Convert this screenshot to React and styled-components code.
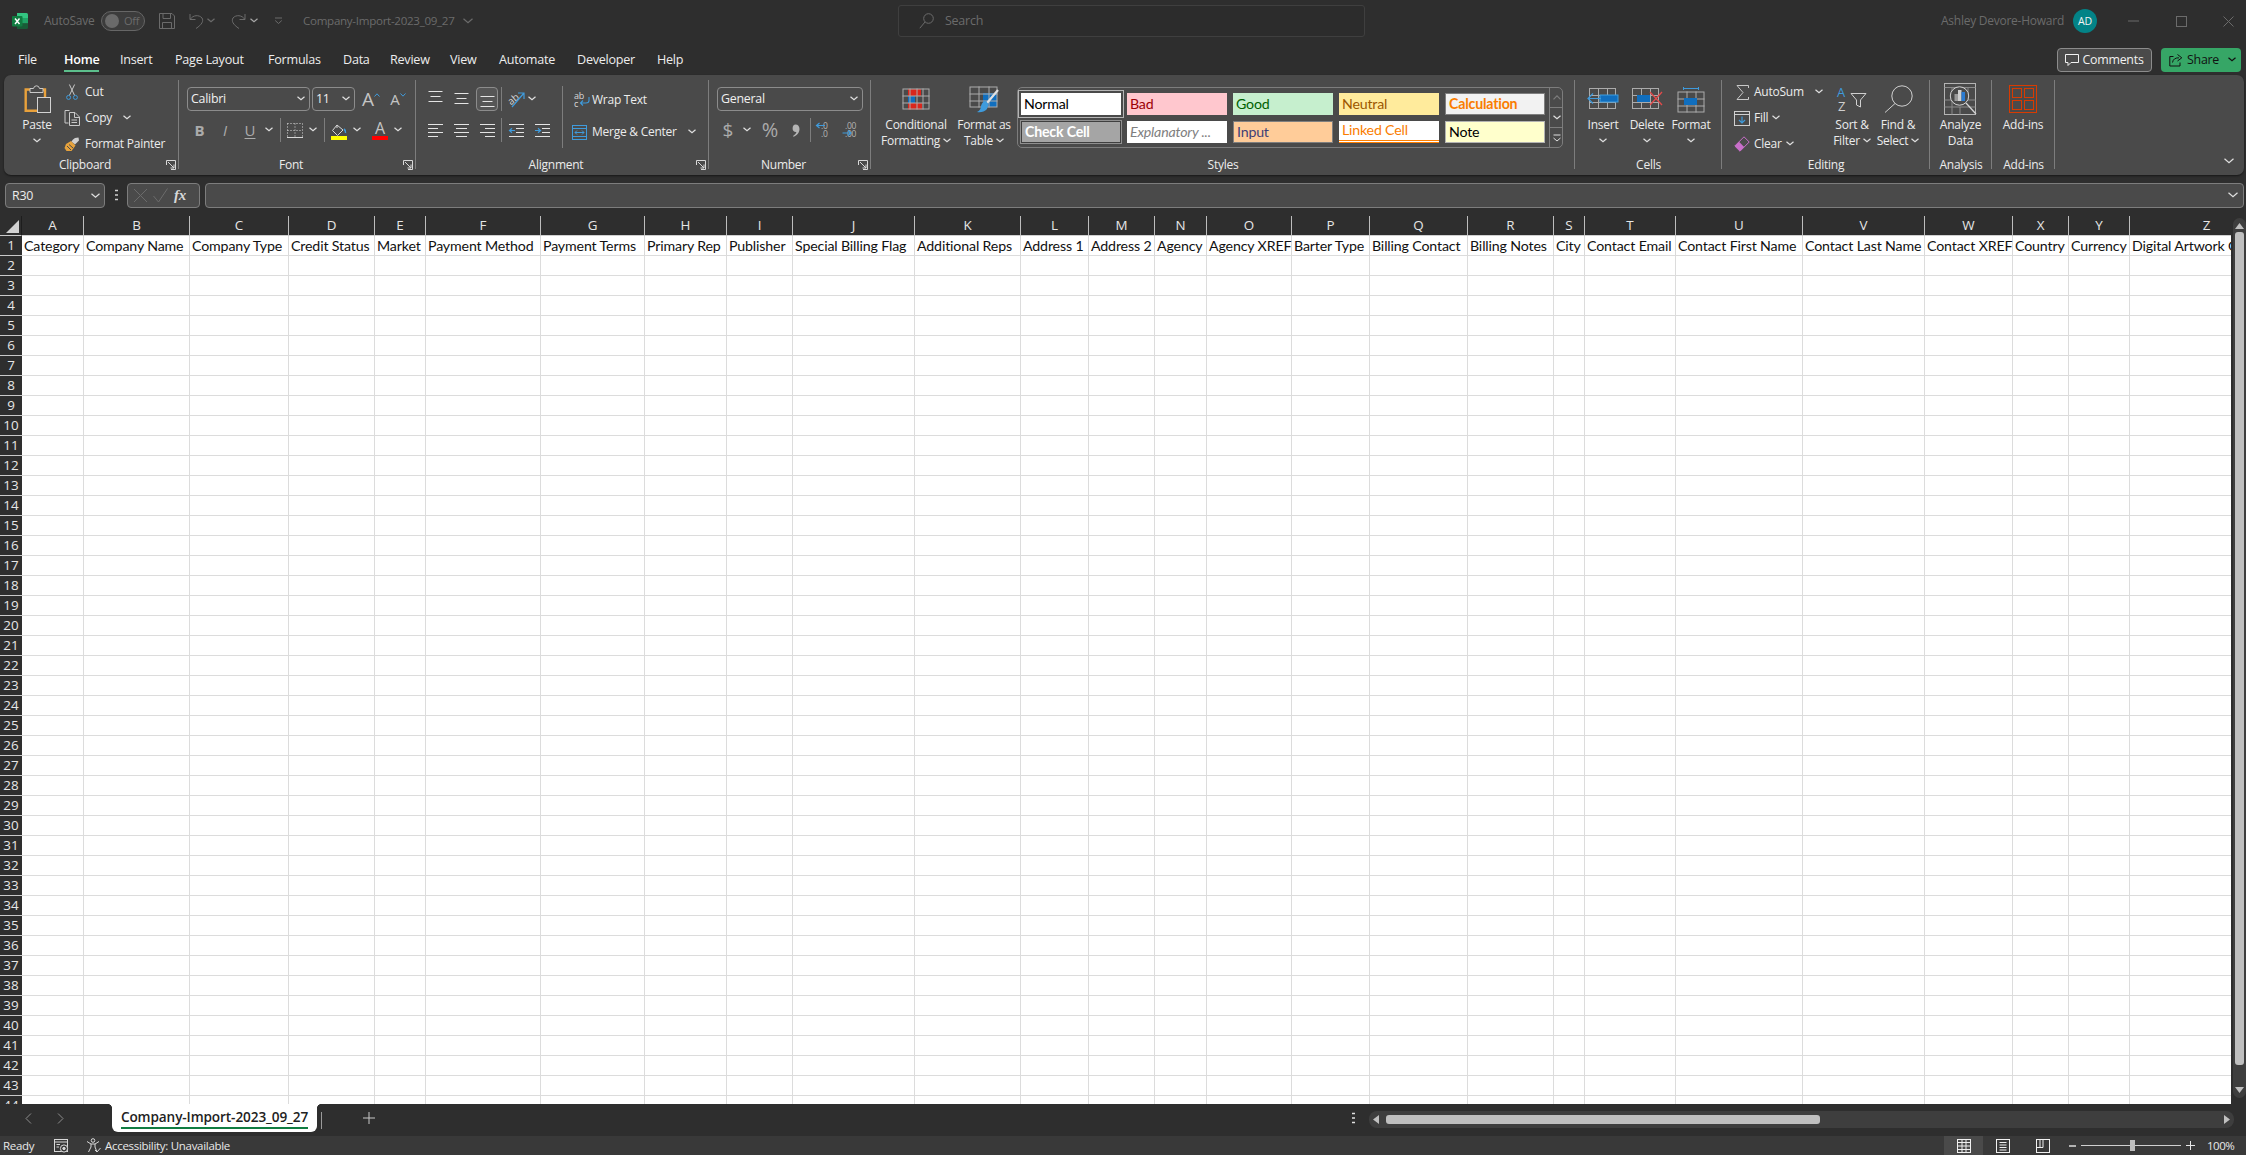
import React from 'react';
import styled, { createGlobalStyle, css } from 'styled-components';

const UI = '"Open Sans", "Noto Sans", sans-serif';
const SHEET = 'Lato, "Open Sans", sans-serif';
const BLUE = '#3f9bdc';
const LINE = '#c9c9c9';
const DIM = '#6b6b6b';

const Global = createGlobalStyle`
  html, body { margin: 0; padding: 0; background: #2e2e2e; }
  * { box-sizing: border-box; }
  svg { display: block; flex: none; overflow: visible; }
`;

const App_ = styled.div`
  width: 2246px; height: 1155px; overflow: hidden;
  display: flex; flex-direction: column;
  background: #2e2e2e; color: #ececec;
  font: 12px/16px ${UI}; letter-spacing: -0.25px;
`;

/* ---------- title bar ---------- */
const TitleBar = styled.header`
  height: 42px; flex: none; display: flex; align-items: center; color: ${DIM};
`;
const TitleLeft = styled.div`width: 898px; flex: none; display: flex; align-items: center; padding-left: 12px;`;
const Tool = styled.span`
  display: inline-flex; align-items: center; justify-content: center; flex: none; position: relative;
  width: ${p => p.$w || 24}px; height: ${p => p.$h || 24}px;
  margin-left: ${p => p.$ml || 0}px;
  color: ${p => p.$c || 'inherit'};
  font-size: ${p => p.$fs || 12}px;
`;
const AutoSave = styled.span`width: 50px; margin-left: 15px; flex: none; font-size: 12px; white-space: nowrap;`;
const Toggle = styled.span`
  width: 44px; height: 20px; margin-left: 7px; flex: none; display: flex; align-items: center; gap: 5px;
  border: 1px solid #666; border-radius: 10px; background: #3c3c3c; padding-left: 3px; font-size: 11px;
`;
const Knob = styled.span`width: 14px; height: 14px; border-radius: 50%; background: #6a6a6a; flex: none;`;
const DocTitle = styled.span`width: 156px; margin-left: 19px; flex: none; font-size: 11.6px; letter-spacing: -0.3px; white-space: nowrap;`;
const SearchBox = styled.div`
  width: 467px; height: 32px; flex: none; display: flex; align-items: center; gap: 11px; padding-left: 20px;
  border: 1px solid #3f3f3f; border-radius: 3px; background: #2c2c2c; font-size: 12.5px;
`;
const TitleRight = styled.div`flex: 1; display: flex; align-items: center; justify-content: flex-end;`;
const UserName = styled.span`font-size: 12px; white-space: nowrap;`;
const Avatar = styled.span`
  width: 24px; height: 24px; margin-left: 9px; border-radius: 50%; background: #038387; color: #f4f4f4;
  display: flex; align-items: center; justify-content: center; font-size: 10.5px; flex: none;
`;

/* ---------- tabs ---------- */
const TabsRow = styled.nav`height: 33px; flex: none; display: flex; align-items: center; padding: 3px 5px 0 18px;`;
const TabSlot = styled.span`width: ${p => p.$w}px; flex: none; display: flex;`;
const TabText = styled.span`
  position: relative; font-size: 12.6px; white-space: nowrap; color: #ededed;
  ${p => p.$on && css`
    font-weight: 600; color: #fff;
    &::after { content: ''; position: absolute; left: 0; right: 0; bottom: -4px; height: 2px; background: #5cbf8c; }
  `}
`;
const Spring = styled.span`flex: 1;`;
const CommentsBtn = styled.button`
  width: 95px; height: 24px; display: flex; align-items: center; justify-content: center; gap: 3px;
  background: #4a4a4a; border: 1px solid #8c8c8c; border-radius: 4px; color: #f0f0f0; font: inherit; font-size: 12.4px; padding: 0; letter-spacing: -0.25px;
`;
const ShareBtn = styled.button`
  width: 80px; height: 24px; margin-left: 9px; display: flex; align-items: center; gap: 4px; padding: 0 5px 0 8px;
  background: #36a666; border: 0; border-radius: 4px; color: #111; font: inherit; font-size: 12.4px; letter-spacing: -0.25px;
`;
const ShareChev = styled.span`margin-left: auto; display: flex;`;

/* ---------- ribbon ---------- */
const Ribbon = styled.section`
  height: 100px; flex: none; margin: 0 2px 0 4px; padding-top: 4px; display: flex;
  background: #4a4a4a; border-radius: 7px; box-shadow: 0 1px 2px rgba(0,0,0,.5);
`;
const Group = styled.div`
  width: ${p => p.$w}px; height: 96px; flex: none; display: flex; flex-direction: column; position: relative;
  &::after { content: ''; position: absolute; right: 0; top: 1px; bottom: 6px; width: 1px; background: #7d7d7d; }
`;
const Body = styled.div`height: 78px; flex: none; display: flex; padding-left: ${p => p.$pl || 0}px;`;
const GroupFoot = styled.div`height: 16px; flex: none; display: flex; align-items: center; padding-right: ${p => p.$launch ? 3 : 0}px;`;
const GroupName = styled.span`flex: 1; text-align: center; color: #ececec;`;
const Rest = styled.div`flex: 1; display: flex; align-items: flex-end; justify-content: flex-end; padding: 0 10px 11px 0;`;

const SmallCol = styled.div`width: ${p => p.$w}px; flex: none; display: flex; flex-direction: column;`;
const SmallRow = styled.div`height: 26px; flex: none; display: flex; align-items: center; white-space: nowrap; gap: ${p => p.$gap ?? 5}px;`;
const IconSlot = styled.span`width: 16px; flex: none; display: flex; justify-content: center;`;
const Large = styled.div`
  width: ${p => p.$w}px; margin-left: ${p => p.$ml || 0}px; flex: none; display: flex; flex-direction: column; align-items: center; padding-top: 2px;
`;
const LargeIcon = styled.span`height: 36px; flex: none; display: flex; align-items: center; justify-content: center;`;
const LargeText = styled.span`line-height: 16px; white-space: nowrap; display: flex; align-items: center; gap: 3px; height: 16px;`;
const ChevLine = styled.span`height: 16px; display: flex; align-items: center;`;

const Stack = styled.div`display: flex; flex-direction: column; padding-top: 8px; gap: 7px;`;
const Line = styled.div`display: flex; align-items: center; height: 24px;`;
const Select = styled.div`
  width: ${p => p.$w}px; height: 24px; flex: none; margin-left: ${p => p.$ml || 0}px;
  display: flex; align-items: center; justify-content: space-between; padding: 0 4px 0 3px;
  border: 1px solid #8c8c8c; border-radius: 4px; background: #4a4a4a; font-size: 12.4px; color: #f0f0f0;
`;
const Pressed = styled.span`
  width: 22px; height: 24px; margin-left: 2px; flex: none; display: flex; align-items: center; justify-content: center;
  border: 1px solid #8c8c8c; border-radius: 4px; background: #565656;
`;
const VDiv = styled.span`
  width: 1px; height: ${p => p.$h || 24}px; flex: none; background: #7d7d7d; margin-left: ${p => p.$ml ?? 0}px;
`;
const TallDiv = styled.span`width: 1px; height: 62px; margin: 7px 0 0 7px; flex: none; background: #7d7d7d;`;
const WideCol = styled.div`display: flex; flex-direction: column; padding-top: 5px;`;
const WideRow = styled.div`height: 32px; display: flex; align-items: center; white-space: nowrap; padding-left: ${p => p.$pl}px;`;
const WideText = styled.span`margin-left: ${p => p.$ml}px; font-size: 12px;`;
const Glyph = styled.span`
  font: ${p => p.$weight || 400} ${p => p.$fs || 14}px/1 ${UI}; color: #ababab; font-style: ${p => p.$it ? 'italic' : 'normal'};
  text-decoration: ${p => p.$un ? 'underline' : 'none'}; text-underline-offset: 2px; letter-spacing: 0;
`;
const ColorTool = styled.span`
  display: flex; flex-direction: column; align-items: center; flex: none; width: 16px; height: 20px; justify-content: flex-end;
`;
const ColorBar = styled.span`width: 16px; height: 4px; flex: none; background: ${p => p.$c};`;
const FontA = styled.span`font: 400 ${p => p.$fs || 15}px/${p => p.$fs || 15}px ${UI}; color: #c4c4c4; letter-spacing: 0;`;
const CaretSlot = styled.span`align-self: flex-start; margin-top: 6px; flex: none;`;

/* ---------- style gallery ---------- */
const Gallery = styled.div`
  width: 546px; height: 61px; margin: 8px 0 0 3px; flex: none; display: flex; position: relative;
  border: 1px solid #7d7d7d; border-radius: 5px;
`;
const Tiles = styled.div`
  width: 531px; flex: none; display: grid; grid-template-columns: repeat(5, 100px); grid-auto-rows: 22px; gap: 6px;
  padding: 5px 0 0 3px; column-gap: 6px;
`;
const tileStyles = {
  normal: css`background: #fff; color: #000; outline: 1px solid #b5b5b5; outline-offset: 2px;`,
  bad: css`background: #ffc7ce; color: #9c0006;`,
  good: css`background: #c6efce; color: #006100;`,
  neutral: css`background: #ffeb9c; color: #9c5700;`,
  calc: css`background: #f2f2f2; color: #fa7d00; font-weight: 700; border: 1px solid #7f7f7f;`,
  check: css`background: #a5a5a5; color: #fff; font-weight: 700; border: 1px solid #3f3f3f; outline: 1px solid #8f8f8f;`,
  expl: css`background: #fff; color: #7f7f7f; font-style: italic;`,
  input: css`background: #fc9; color: #3f3f76; border: 1px solid #7f7f7f;`,
  linked: css`background: #fff; color: #fa7d00; border-bottom: 3px double #ff8001;`,
  note: css`background: #ffc; color: #000; border: 1px solid #b2b2b2;`,
};
const Tile = styled.div`
  display: flex; align-items: center; padding-left: 3px; font: 400 14.2px/1 ${SHEET}; letter-spacing: -0.2px; white-space: nowrap; overflow: hidden;
  ${p => tileStyles[p.$v]}
`;
const GalleryScroll = styled.div`
  width: 14px; flex: none; margin-left: auto; display: flex; flex-direction: column; border-left: 1px solid #7d7d7d;
`;
const GalleryBtn = styled.span`
  flex: 1; display: flex; align-items: center; justify-content: center;
  border-top: ${p => p.$first ? 0 : '1px solid #7d7d7d'};
`;

/* ---------- formula bar ---------- */
const FormulaBar = styled.div`height: 41px; flex: none; display: flex; align-items: flex-start; padding: 8px 2px 0 5px;`;
const NameBox = styled.div`
  width: 100px; height: 25px; flex: none; display: flex; align-items: center; justify-content: space-between; padding: 0 4px 0 6px;
  border: 1px solid #7d7d7d; border-radius: 4px; background: #4a4a4a; font-size: 12.4px;
`;
const Dots = styled.span`width: 22px; height: 25px; flex: none; display: flex; align-items: center; justify-content: center;`;
const FxBox = styled.div`
  width: 73px; height: 25px; flex: none; display: flex; align-items: center; padding-left: 5px; gap: 5px;
  border: 1px solid #7d7d7d; border-radius: 4px; background: #4a4a4a;
`;
const Fx = styled.span`font: italic 700 15px/1 "Liberation Serif", serif; color: #d8d8d8; margin-left: 1px;`;
const FormulaInput = styled.div`
  flex: 1; height: 25px; margin-left: 5px; display: flex; align-items: center; justify-content: flex-end; padding-right: 5px;
  border: 1px solid #7d7d7d; border-radius: 4px; background: #4a4a4a;
`;

/* ---------- sheet ---------- */
const Sheet = styled.main`flex: 1; min-height: 0; display: flex; background: #2e2e2e;`;
const COLS = [
  ['A', 62, 'Category'], ['B', 106, 'Company Name'], ['C', 99, 'Company Type'], ['D', 86, 'Credit Status'],
  ['E', 51, 'Market'], ['F', 115, 'Payment Method'], ['G', 104, 'Payment Terms'], ['H', 82, 'Primary Rep'],
  ['I', 66, 'Publisher'], ['J', 122, 'Special Billing Flag'], ['K', 106, 'Additional Reps'], ['L', 68, 'Address 1'],
  ['M', 66, 'Address 2'], ['N', 52, 'Agency'], ['O', 85, 'Agency XREF'], ['P', 78, 'Barter Type'],
  ['Q', 98, 'Billing Contact'], ['R', 86, 'Billing Notes'], ['S', 31, 'City'], ['T', 91, 'Contact Email'],
  ['U', 127, 'Contact First Name'], ['V', 122, 'Contact Last Name'], ['W', 88, 'Contact XREF'], ['X', 56, 'Country'],
  ['Y', 61, 'Currency'], ['Z', 154, 'Digital Artwork Cost'],
];
const GRID_TEMPLATE = '22px ' + COLS.map(c => c[1] + 'px').join(' ');
const ROWS = Array.from({ length: 44 }, (_, i) => i + 1);

const GridView = styled.div`width: 2231px; flex: none; overflow: hidden; background: #fff;`;
const Grid = styled.div`
  display: grid; grid-template-columns: ${GRID_TEMPLATE}; grid-auto-rows: 20px;
`;
const Corner = styled.div`
  background: #2e2e2e; border-right: 1px solid #1d1d1d; border-bottom: 1px solid #c9c9c9; display: flex; align-items: flex-end; justify-content: flex-end; padding: 0 2px 2px 0;
`;
const Triangle = styled.span`
  width: 13px; height: 13px; background: #d2d2d2; clip-path: polygon(100% 0, 100% 100%, 0 100%);
`;
const ColHead = styled.div`
  background: #2e2e2e; color: #e6e6e6; text-align: center; font: 400 13.4px/19px ${UI}; letter-spacing: 0;
  border-right: 1px solid #bdbdbd; border-bottom: 1px solid #d0d0d0; margin-top: 0;
`;
const RowHead = styled.div`
  background: #2e2e2e; color: #e6e6e6; text-align: center; font: 400 13.4px/19px ${UI}; letter-spacing: 0;
  border-bottom: 1px solid #c9c9c9;
`;
const Cell = styled.div`
  padding-left: 2px; background: #fff; color: #111; white-space: nowrap; overflow: visible; position: relative;
  font: 400 14.2px/19px ${SHEET}; letter-spacing: -0.15px;
  border-right: ${p => p.$head ? '1px solid #d9d9d9' : '1px solid #dcdcdc'}; border-bottom: 1px solid #dcdcdc;
`;
const VScroll = styled.aside`
  width: 15px; flex: none; display: flex; flex-direction: column; align-items: center; padding: 2px 0 6px 2px;
`;
const VTrack = styled.div`
  width: 13px; flex: 1; display: flex; flex-direction: column; align-items: center; padding: 5px 0; gap: 3px; background: #3e3e3e; border-radius: 7px;
`;
const VThumb = styled.span`width: 9px; height: 833px; flex: none; background: #bfbfbf; border-radius: 3px;`;
const Tri = styled.span`
  width: 9px; height: 6px; flex: none; background: #bfbfbf;
  clip-path: ${p => p.$up ? 'polygon(50% 0, 100% 100%, 0 100%)' : 'polygon(0 0, 100% 0, 50% 100%)'};
`;

/* ---------- sheet tabs ---------- */
const TabBar = styled.div`height: 32px; flex: none; display: flex; align-items: flex-start; padding-left: 12px; background: #2e2e2e;`;
const SheetTab = styled.div`
  width: 205px; height: 28px; margin-left: 36px; flex: none; display: flex; justify-content: center; padding-top: 3px; position: relative;
  background: #fff; border-radius: 0 0 6px 6px; color: #222; font: 600 13.6px/20px ${UI}; letter-spacing: -0.1px; white-space: nowrap;
  &::before, &::after { content: ''; position: absolute; top: 0; width: 5px; height: 5px; }
  &::before { left: -5px; background: radial-gradient(circle at 0 100%, transparent 5px, #fff 5.5px); }
  &::after { right: -5px; background: radial-gradient(circle at 100% 100%, transparent 5px, #fff 5.5px); }
`;
const SheetName = styled.span`height: 22px; border-bottom: 2px solid #107c41;`;
const TabDivider = styled.span`width: 1px; height: 17px; margin: 8px 0 0 4px; flex: none; background: #9a9a9a;`;
const NavSlot = styled(Tool)`height: 28px;`;
const HScroll = styled.div`
  width: 865px; height: 17px; margin: 7px 12px 0 8px; flex: none; display: flex; align-items: center; gap: 3px; padding: 0 4px;
  background: #3e3e3e; border-radius: 8px;
`;
const HThumb = styled.span`width: 434px; height: 9px; margin-left: 4px; flex: none; background: #bfbfbf; border-radius: 3px;`;
const HTri = styled.span`
  width: 6px; height: 9px; flex: none; background: #bfbfbf;
  clip-path: ${p => p.$left ? 'polygon(100% 0, 100% 100%, 0 50%)' : 'polygon(0 0, 100% 50%, 0 100%)'};
`;

/* ---------- status bar ---------- */
const Status = styled.footer`
  height: 19px; flex: none; display: flex; align-items: center; background: #393939; padding-left: 3px; color: #e8e8e8; font-size: 11.5px; letter-spacing: -0.3px;
`;
const StatusText = styled.span`white-space: nowrap; margin-left: ${p => p.$ml || 0}px; width: ${p => p.$w ? p.$w + 'px' : 'auto'}; flex: none;`;
const ViewBtn = styled.span`
  width: ${p => p.$w}px; height: 19px; flex: none; display: flex; align-items: center; justify-content: center; background: ${p => p.$on ? '#4a4a4a' : 'transparent'};
`;
const Slider = styled.span`width: 100px; height: 1px; flex: none; background: #cfcfcf; position: relative;`;
const SliderThumb = styled.span`position: absolute; left: 49px; top: -5px; width: 5px; height: 11px; background: #bdbdbd;`;
const Zoom = styled.span`width: 27px; margin: 0 12px 0 8px; flex: none; white-space: nowrap; font-size: 11.5px; letter-spacing: -0.5px;`;

/* ---------- icons ---------- */
const Svg = ({ w, h, children, ...rest }) => (
  <svg width={w} height={h} viewBox={`0 0 ${w} ${h}`} fill="none" strokeWidth="1" {...rest}>{children}</svg>
);
const Chev = ({ c = '#e0e0e0', w = 7 }) => (
  <Svg w={w + 1} h={w / 2 + 2}><polyline points={`0.5,0.7 ${(w + 1) / 2},${w / 2 + 0.3} ${w + 0.5},0.7`} stroke={c} strokeWidth="1.2" /></Svg>
);
const Launcher = () => (
  <Svg w={10} h={10}>
    <path d="M0.5 5V0.5H9.5V9.5H5" stroke="#d8d8d8" />
    <path d="M2 2L8 8M8 4.5V8H4.5" stroke="#d8d8d8" />
  </Svg>
);
const ExcelLogo = () => (
  <Svg w={17} h={16}>
    <path d="M5 0H14.5Q16 0 16 1.5V5H5Z" fill="#33c481" />
    <rect x="5" y="5" width="11" height="5.5" fill="#21a366" />
    <path d="M5 10.5H16V14.5Q16 16 14.5 16H5Z" fill="#185c37" />
    <rect x="0" y="3" width="10.5" height="10.5" rx="1" fill="#107c41" />
    <path d="M3 5.5L7.5 11M7.5 5.5L3 11" stroke="#fff" strokeWidth="1.4" />
  </Svg>
);
const SaveIcon = () => (
  <Svg w={16} h={16} stroke={DIM}>
    <path d="M0.5 0.5H13L15.5 3V15.5H0.5Z" />
    <path d="M4 0.5V5.5H11.5V0.5M3.5 15.5V9.5H12.5V15.5" />
  </Svg>
);
const UndoIcon = ({ flip }) => (
  <Svg w={15} h={16} stroke={DIM} transform={flip ? 'scale(-1 1)' : undefined}>
    <path d="M1 1V6.5H6.5" />
    <path d="M1.3 6.2C4 2 10 1.5 13 5C14.8 8 13 11.5 7 15.5" />
  </Svg>
);
const CustomizeIcon = () => (
  <Svg w={9} h={8} stroke={DIM}><path d="M1 1H8M1.2 3.5L4.5 6.5L7.8 3.5" /></Svg>
);
const SearchIcon = () => (
  <Svg w={15} h={16} stroke={DIM}>
    <circle cx="9.5" cy="5.5" r="4.8" /><path d="M6 9L0.8 15.2" />
  </Svg>
);
const CommentIcon = () => (
  <Svg w={14} h={13} stroke="#f0f0f0"><path d="M0.5 0.5H13.5V8.5H6L3 11.5V8.5H0.5Z" /></Svg>
);
const ShareIcon = () => (
  <Svg w={14} h={14} stroke="#111">
    <path d="M4.5 3.5H0.8V13H11V9.5" /><path d="M3.5 9.5C4 6 6.5 4.8 10 4.8M8.5 1.5L12.8 4.8L8.5 8" />
  </Svg>
);
const PasteIcon = () => (
  <Svg w={27} h={28}>
    <path d="M8 4.5H1.7V25.8H13M17 4.5H21V12" stroke="#e9a13b" strokeWidth="2.4" />
    <path d="M6 7.5V3.5H9.5Q10 0.8 12.5 0.8T15.5 3.5H19V7.5Z" stroke="#c9c9c9" fill="#4a4a4a" />
    <rect x="13.5" y="12.5" width="13" height="15" stroke="#d2d2d2" fill="#4a4a4a" />
  </Svg>
);
const CutIcon = () => (
  <Svg w={12} h={16}>
    <path d="M3.4 11.5L8.6 0.5M8.6 11.5L3.4 0.5" stroke={LINE} />
    <circle cx="2.6" cy="13.4" r="2" stroke={BLUE} /><circle cx="9.4" cy="13.4" r="2" stroke={BLUE} />
  </Svg>
);
const CopyIcon = () => (
  <Svg w={16} h={16} stroke={LINE}>
    <path d="M5.5 0.5H1V13H4.5" />
    <path d="M5.5 2.5H11L15.5 7V15.5H5.5Z" /><path d="M10.5 3V7.5H15M7.5 10H13M7.5 12.5H13" />
  </Svg>
);
const PainterIcon = () => (
  <Svg w={16} h={15}>
    <path d="M2 7L7 4L11.5 8.5L7.5 14H2.5L0.5 11Z" fill="#e6a23c" />
    <path d="M3 9L7 13M5 7.5L9 11" stroke="#4a4a4a" />
    <path d="M7.5 4.5L9 2.5L11 1L14.5 0.5L15 3.5L13.5 5L11 7.5Z" fill="#cfcfcf" />
  </Svg>
);
const BorderIcon = () => (
  <Svg w={16} h={15} stroke="#d8d8d8">
    <path d="M0.5 0.5H15.5V14.5M0.5 0.5V14.5M8 0.5V14.5M0.5 7.5H15.5" strokeDasharray="1 2" />
    <path d="M0 14.5H16" />
  </Svg>
);
const BucketIcon = () => (
  <Svg w={16} h={12} stroke="#d8d8d8">
    <path d="M6 1L1.5 6.5L6.5 11.5L12 6Z" /><path d="M6 1V4" />
    <path d="M13 5Q15 6.5 14.5 9" stroke={BLUE} strokeWidth="1.6" />
  </Svg>
);
const Caret = ({ up }) => (
  <Svg w={6} h={4}><polyline points={up ? '0.5,3.5 3,0.8 5.5,3.5' : '0.5,0.5 3,3.2 5.5,0.5'} stroke={BLUE} /></Svg>
);
const CommaIcon = () => (
  <Svg w={8} h={13}>
    <path d="M3.5 0.5C6 0.5 7.5 2.5 7.5 5C7.5 8.5 5 11.5 1.5 12.8L1 12C3 10.8 4.2 9.5 4.4 8C2 8.3 0.6 6.5 0.6 4.4C0.6 2 1.8 0.5 3.5 0.5Z" fill="#b4b4b4" />
  </Svg>
);
const AlignV = ({ y }) => (
  <Svg w={15} h={18} stroke="#e4e4e4">
    <path d={`M0.5 ${y}.5H14.5M2.5 ${y + 5}.5H12.5M0.5 ${y + 10}.5H14.5`} />
  </Svg>
);
const AlignH = ({ k }) => {
  const n = { l: [0, 15, 0, 10, 0, 15, 0, 10], c: [0, 15, 2, 13, 0, 15, 2, 13], r: [0, 15, 5, 15, 0, 15, 5, 15] }[k];
  return (
    <Svg w={15} h={14} stroke="#e4e4e4">
      <path d={`M${n[0]} 1.5H${n[1]}M${n[2]} 5.5H${n[3]}M${n[4]} 9.5H${n[5]}M${n[6]} 13.5H${n[7]}`} />
    </Svg>
  );
};
const IndentIcon = ({ right }) => (
  <Svg w={15} h={13} stroke="#e4e4e4">
    <path d="M0 0.5H15M7 4.5H15M7 8.5H15M0 12.5H15" />
    <path d={right ? 'M0 6.5H5M3 4.3L5.5 6.5L3 8.7' : 'M0.5 6.5H6M3 4.3L0.5 6.5L3 8.7'} stroke={BLUE} strokeWidth="1.2" />
  </Svg>
);
const OrientIcon = () => (
  <Svg w={17} h={18}>
    <text x="0" y="13" fontFamily={UI} fontSize="10" fill="#d8d8d8" transform="rotate(-40 5 10)">ab</text>
    <path d="M4 17L16 3M10 3H16V9" stroke={BLUE} strokeWidth="1.2" />
  </Svg>
);
const WrapIcon = () => (
  <Svg w={16} h={16}>
    <text x="0" y="7" fontFamily={UI} fontSize="9" fill="#d8d8d8">ab</text>
    <text x="0" y="15" fontFamily={UI} fontSize="9" fill="#d8d8d8">c</text>
    <path d="M15 5V8.5Q15 11 12 11H6.5M9 8.5L6.5 11L9 13.5" stroke={BLUE} strokeWidth="1.1" />
  </Svg>
);
const MergeIcon = () => (
  <Svg w={15} h={15} stroke={BLUE}>
    <rect x="0.5" y="0.5" width="14" height="14" /><path d="M0.5 3.5H14.5M0.5 11.5H14.5" />
    <path d="M3 7.5H12M5 5.5L3 7.5L5 9.5M10 5.5L12 7.5L10 9.5" />
  </Svg>
);
const DecimalIcon = ({ more }) => (
  <Svg w={18} h={16}>
    <text x={more ? 3 : 5} y="6.5" fontFamily={UI} fontSize="8.5" fill="#b4b4b4">{more ? '.00' : '.0'}</text>
    <text x={more ? 3 : 5} y="15" fontFamily={UI} fontSize="8.5" fill="#b4b4b4">{more ? '.00' : '.0'}</text>
    <path d={more ? 'M0.5 11H9M6 8.5L9 11L6 13.5' : 'M0.5 3.5H9M3.5 1L0.5 3.5L3.5 6'} stroke={BLUE} strokeWidth="1.2" />
  </Svg>
);
const SheetGrid = ({ x, y, w, h, cols, rows, stroke = '#ababab' }) => {
  const cw = w / cols; const rh = h / rows; let d = '';
  for (let i = 1; i < cols; i++) d += `M${x + Math.round(cw * i) + 0.5} ${y}V${y + h}`;
  for (let i = 1; i < rows; i++) d += `M${x} ${y + Math.round(rh * i) + 0.5}H${x + w}`;
  return <g stroke={stroke}><rect x={x + 0.5} y={y + 0.5} width={w - 1} height={h - 1} /><path d={d} /></g>;
};
const CondIcon = () => (
  <Svg w={28} h={22}>
    <rect x="6" y="1" width="13" height="7" fill="#d9261c" />
    <rect x="6" y="8" width="7" height="7" fill="#106ebe" />
    <rect x="6" y="15" width="14" height="6.5" fill="#d9261c" />
    <SheetGrid x={0.5} y={0.5} w={27} h={21} cols={4} rows={3} />
  </Svg>
);
const TableIcon = () => (
  <Svg w={31} h={27}>
    <rect x="14" y="7" width="14" height="14" fill="#106ebe" />
    <SheetGrid x={0.5} y={0.5} w={28} h={21} cols={3} rows={3} />
    <path d="M29 4L18 17" stroke="#e0e0e0" strokeWidth="2.2" />
    <path d="M16 15Q21 17 18 23Q14 27 8 26Q12 24 12 20Q13 16 16 15Z" fill={BLUE} />
  </Svg>
);
const InsertIcon = () => (
  <Svg w={32} h={22}>
    <SheetGrid x={2} y={0} w={27} h={21} cols={3} rows={3} />
    <rect x="13" y="7" width="18" height="7" fill="#106ebe" stroke={BLUE} />
    <path d="M14 10.5H1M6 5.5L1 10.5L6 15.5" stroke={BLUE} strokeWidth="1.2" />
  </Svg>
);
const DeleteIcon = () => (
  <Svg w={31} h={22}>
    <SheetGrid x={0} y={0} w={27} h={21} cols={3} rows={3} />
    <rect x="5" y="7" width="13" height="7" fill="#106ebe" />
    <path d="M18 4L30 17M30 4L18 17" stroke="#e34a4a" strokeWidth="1.3" />
  </Svg>
);
const FormatIcon = () => (
  <Svg w={28} h={27}>
    <path d="M6.5 1V4M21.5 1V4M6.5 2.5H21.5" stroke={BLUE} />
    <SheetGrid x={0.5} y={5.5} w={27} h={21} cols={3} rows={3} />
    <rect x="7" y="12" width="13" height="7" fill="#106ebe" />
  </Svg>
);
const SigmaIcon = () => (
  <Svg w={13} h={15} stroke="#c8c8c8"><path d="M12.5 3V0.5H1L7 7.5L1 14.5H12.5V12" /></Svg>
);
const FillIcon = () => (
  <Svg w={16} h={15}>
    <rect x="0.5" y="0.5" width="15" height="14" stroke="#d0d0d0" /><path d="M0.5 3.5H15.5" stroke="#d0d0d0" />
    <path d="M8 5.5V12M5 9L8 12L11 9" stroke={BLUE} strokeWidth="1.2" />
  </Svg>
);
const EraserIcon = () => (
  <Svg w={16} h={16}>
    <path d="M10 0.8L15.2 6L6 15.2L0.8 10Z" stroke="#c86fc9" />
    <path d="M5 5.8L10.2 11L6 15.2L0.8 10Z" fill="#c86fc9" />
  </Svg>
);
const SortIcon = () => (
  <Svg w={30} h={26}>
    <text x="0" y="11" fontFamily={UI} fontSize="13" fill={BLUE}>A</text>
    <text x="1" y="25" fontFamily={UI} fontSize="13" fill="#cfcfcf">Z</text>
    <path d="M14 7.5H29L23.5 14V21L19.5 19V14Z" stroke="#d0d0d0" />
  </Svg>
);
const FindIcon = () => (
  <Svg w={29} h={28} stroke="#d0d0d0">
    <circle cx="18" cy="11" r="10.2" /><path d="M11 18.5L1 27.5" />
  </Svg>
);
const AnalyzeIcon = () => (
  <Svg w={33} h={32}>
    <rect x="0.5" y="0.5" width="31" height="31" stroke="#b4b4b4" />
    <path d="M0.5 4.5H31.5M0.5 17H31.5M0.5 24H31.5M8 4.5V31.5M16 24V31.5M24 4.5V17" stroke="#8a8a8a" />
    <circle cx="15.5" cy="13" r="9.2" stroke="#d4d4d4" fill="#4a4a4a" />
    <rect x="10.5" y="11" width="3.5" height="7" fill="#9a9a9a" />
    <rect x="14" y="7" width="3.5" height="11" fill="#cfcfcf" />
    <rect x="17.5" y="9" width="3.5" height="9" fill="#2b7cd3" />
    <path d="M22 20L32 31" stroke="#d4d4d4" strokeWidth="1.3" />
  </Svg>
);
const AddinsIcon = () => (
  <Svg w={28} h={28} stroke="#d83b01">
    <rect x="0.5" y="0.5" width="27" height="27" />
    <rect x="3.5" y="3.5" width="9" height="9" /><rect x="15.5" y="3.5" width="9" height="9" />
    <rect x="3.5" y="15.5" width="9" height="9" /><rect x="15.5" y="15.5" width="9" height="9" />
  </Svg>
);
const XIcon = () => <Svg w={15} h={15} stroke={DIM}><path d="M1 1L14 14M14 1L1 14" /></Svg>;
const CheckIcon = () => <Svg w={15} h={15} stroke={DIM}><path d="M0.5 8L5.5 14L14.5 0.5" /></Svg>;
const DotsV = ({ c = '#cfcfcf' }) => (
  <Svg w={3} h={11}><path d="M0 0.5H3M0 5H3M0 9.5H3" stroke={c} strokeWidth="1.6" /></Svg>
);
const Arrow = ({ right }) => (
  <Svg w={7} h={11} stroke="#8d8d8d"><path d={right ? 'M1 0.5L6 5.5L1 10.5' : 'M6 0.5L1 5.5L6 10.5'} /></Svg>
);
const MacroIcon = () => (
  <Svg w={15} h={14} stroke="#d8d8d8">
    <rect x="0.5" y="0.5" width="13" height="12" /><path d="M0.5 3H13.5M2.5 5.5H6M2.5 8H5" />
    <circle cx="10" cy="9.5" r="3.6" fill="#393939" /><circle cx="10" cy="9.5" r="1.2" fill="#d8d8d8" />
  </Svg>
);
const A11yIcon = () => (
  <Svg w={15} h={15} stroke="#d8d8d8">
    <circle cx="7" cy="2.5" r="1.8" /><path d="M1 3.5L5 6V9L2.5 14M13 3.5L9 6V9L11 14M5 6H9" />
    <path d="M9 12L11 14L14.5 10" />
  </Svg>
);
const GridViewIcon = () => (
  <Svg w={14} h={14} stroke="#f0f0f0">
    <rect x="0.5" y="0.5" width="13" height="13" /><path d="M5 0.5V13.5M9 0.5V13.5M0.5 3.5H13.5M0.5 7H13.5M0.5 10.5H13.5" />
  </Svg>
);
const PageViewIcon = () => (
  <Svg w={14} h={14} stroke="#f0f0f0">
    <rect x="0.5" y="0.5" width="13" height="13" /><path d="M3.5 3.5H10.5M3.5 6H10.5M3.5 8.5H10.5M3.5 11H10.5" />
  </Svg>
);
const BreakViewIcon = () => (
  <Svg w={14} h={14} stroke="#f0f0f0">
    <rect x="0.5" y="0.5" width="13" height="13" /><path d="M0.5 8.5H7M7 0.5V8.5M4 0.5V8.5" />
  </Svg>
);

/* ---------- data ---------- */
const TABS = [
  ['File', 46], ['Home', 56, true], ['Insert', 55], ['Page Layout', 93], ['Formulas', 75], ['Data', 47],
  ['Review', 60], ['View', 49], ['Automate', 78], ['Developer', 80], ['Help', 40],
];
const TILES = [
  ['normal', 'Normal'], ['bad', 'Bad'], ['good', 'Good'], ['neutral', 'Neutral'], ['calc', 'Calculation'],
  ['check', 'Check Cell'], ['expl', 'Explanatory ...'], ['input', 'Input'], ['linked', 'Linked Cell'], ['note', 'Note'],
];

const Foot = ({ name, launch }) => (
  <GroupFoot $launch={launch}>
    <GroupName>{name}</GroupName>
    {launch && <Launcher />}
  </GroupFoot>
);
const Big = ({ w, ml, icon, lines, chevLine }) => (
  <Large $w={w} $ml={ml}>
    <LargeIcon>{icon}</LargeIcon>
    {lines.map((l, i) => (
      <LargeText key={l}>{l}{chevLine === undefined && i === lines.length - 1 && lines.length === 2 && <Chev />}</LargeText>
    ))}
    {chevLine && <ChevLine><Chev /></ChevLine>}
  </Large>
);

export default function App() {
  return (
    <App_>
      <Global />
      <TitleBar>
        <TitleLeft>
          <ExcelLogo />
          <AutoSave>AutoSave</AutoSave>
          <Toggle><Knob />Off</Toggle>
          <Tool $w={16} $ml={14}><SaveIcon /></Tool>
          <Tool $w={15} $ml={14}><UndoIcon /></Tool>
          <Tool $w={12} $ml={1}><Chev c={DIM} /></Tool>
          <Tool $w={15} $ml={14}><UndoIcon flip /></Tool>
          <Tool $w={12} $ml={2}><Chev c="#a8a8a8" /></Tool>
          <Tool $w={12} $ml={12}><CustomizeIcon /></Tool>
          <DocTitle>Company-Import-2023_09_27</DocTitle>
          <Tool $w={12} $ml={3}><Chev c={DIM} w={9} /></Tool>
        </TitleLeft>
        <SearchBox><SearchIcon />Search</SearchBox>
        <TitleRight>
          <UserName>Ashley Devore-Howard</UserName>
          <Avatar>AD</Avatar>
          <Tool $w={48} $ml={12}><Svg w={11} h={2}><path d="M0 1H11" stroke={DIM} /></Svg></Tool>
          <Tool $w={48}><Svg w={11} h={11}><rect x="0.5" y="0.5" width="10" height="10" stroke={DIM} /></Svg></Tool>
          <Tool $w={36} $ml={5}><Svg w={11} h={11}><path d="M0.5 0.5L10.5 10.5M10.5 0.5L0.5 10.5" stroke={DIM} /></Svg></Tool>
        </TitleRight>
      </TitleBar>

      <TabsRow>
        {TABS.map(([name, w, on]) => (
          <TabSlot key={name} $w={w}><TabText $on={on}>{name}</TabText></TabSlot>
        ))}
        <Spring />
        <CommentsBtn><CommentIcon />Comments</CommentsBtn>
        <ShareBtn><ShareIcon />Share<ShareChev><Chev c="#111" /></ShareChev></ShareBtn>
      </TabsRow>

      <Ribbon>
        <Group $w={175}>
          <Body $pl={11}>
            <Large $w={44}>
              <LargeIcon><PasteIcon /></LargeIcon>
              <LargeText>Paste</LargeText>
              <ChevLine><Chev /></ChevLine>
            </Large>
            <SmallCol $w={110} >
              <SmallRow $gap={5}><Tool $w={16} $h={16} $ml={5}><CutIcon /></Tool>Cut</SmallRow>
              <SmallRow $gap={5}><Tool $w={16} $h={16} $ml={5}><CopyIcon /></Tool>Copy<Tool $w={8} $h={8} $ml={6}><Chev /></Tool></SmallRow>
              <SmallRow $gap={5}><Tool $w={16} $h={16} $ml={5}><PainterIcon /></Tool>Format Painter</SmallRow>
            </SmallCol>
          </Body>
          <Foot name="Clipboard" launch />
        </Group>

        <Group $w={237}>
          <Body $pl={8}>
            <Stack>
              <Line>
                <Select $w={123}>Calibri<Chev /></Select>
                <Select $w={43} $ml={2}>11<Chev /></Select>
                <Tool $w={20} $ml={6}><FontA $fs={19}>A</FontA><CaretSlot><Caret up /></CaretSlot></Tool>
                <Tool $w={18} $ml={8}><FontA $fs={15}>A</FontA><CaretSlot><Caret /></CaretSlot></Tool>
              </Line>
              <Line>
                <Tool $w={25}><Glyph $weight={700} $fs={15}>B</Glyph></Tool>
                <Tool $w={26}><Glyph $it $fs={15}>I</Glyph></Tool>
                <Tool $w={24}><Glyph $un $fs={15}>U</Glyph></Tool>
                <Tool $w={14}><Chev /></Tool>
                <VDiv $ml={4} />
                <Tool $w={17} $ml={5}><BorderIcon /></Tool>
                <Tool $w={20}><Chev /></Tool>
                <VDiv $ml={1} />
                <Tool $w={28}><ColorTool><BucketIcon /><ColorBar $c="#ffff00" /></ColorTool></Tool>
                <Tool $w={8}><Chev /></Tool>
                <Tool $w={26} $ml={6}><ColorTool><FontA $fs={16}>A</FontA><ColorBar $c="#ff0000" /></ColorTool></Tool>
                <Tool $w={10}><Chev /></Tool>
              </Line>
            </Stack>
          </Body>
          <Foot name="Font" launch />
        </Group>

        <Group $w={293}>
          <Body $pl={6}>
            <Stack>
              <Line>
                <Tool $w={26}><AlignV y={1} /></Tool>
                <Tool $w={26}><AlignV y={3} /></Tool>
                <Pressed><AlignV y={6} /></Pressed>
                <VDiv $ml={3} />
                <Tool $w={17} $ml={6}><OrientIcon /></Tool>
                <Tool $w={14}><Chev /></Tool>
              </Line>
              <Line>
                <Tool $w={26}><AlignH k="l" /></Tool>
                <Tool $w={26}><AlignH k="c" /></Tool>
                <Tool $w={26}><AlignH k="r" /></Tool>
                <VDiv $ml={1} />
                <Tool $w={26} $ml={1}><IndentIcon /></Tool>
                <Tool $w={26}><IndentIcon right /></Tool>
              </Line>
            </Stack>
            <TallDiv />
            <WideCol>
              <WideRow $pl={11}><WrapIcon /><WideText $ml={2}>Wrap Text</WideText></WideRow>
              <WideRow $pl={9}><MergeIcon /><WideText $ml={5}>Merge &amp; Center</WideText><Tool $w={10} $ml={10}><Chev /></Tool></WideRow>
            </WideCol>
          </Body>
          <Foot name="Alignment" launch />
        </Group>

        <Group $w={162}>
          <Body $pl={8}>
            <Stack>
              <Line><Select $w={146}>General<Chev /></Select></Line>
              <Line>
                <Tool $w={22}><Glyph $fs={19}>$</Glyph></Tool>
                <Tool $w={16}><Chev /></Tool>
                <Tool $w={30}><Glyph $fs={20}>%</Glyph></Tool>
                <Tool $w={22}><CommaIcon /></Tool>
                <VDiv $ml={3} />
                <Tool $w={28}><DecimalIcon /></Tool>
                <Tool $w={24}><DecimalIcon more /></Tool>
              </Line>
            </Stack>
          </Body>
          <Foot name="Number" launch />
        </Group>

        <Group $w={704}>
          <Body $pl={12}>
            <Big w={66} icon={<CondIcon />} lines={['Conditional', 'Formatting']} />
            <Big w={60} ml={5} icon={<TableIcon />} lines={['Format as', 'Table']} />
            <Gallery>
              <Tiles>
                {TILES.map(([v, t]) => <Tile key={v} $v={v}>{t}</Tile>)}
              </Tiles>
              <GalleryScroll>
                <GalleryBtn $first><Svg w={8} h={5}><polyline points="0.5,4.3 4,0.8 7.5,4.3" stroke="#7d7d7d" strokeWidth="1.2" /></Svg></GalleryBtn>
                <GalleryBtn><Chev /></GalleryBtn>
                <GalleryBtn><Svg w={8} h={8} stroke="#e0e0e0"><path d="M0.5 1H7.5M0.5 4L4 7L7.5 4" /></Svg></GalleryBtn>
              </GalleryScroll>
            </Gallery>
          </Body>
          <Foot name="Styles" />
        </Group>

        <Group $w={147}>
          <Body $pl={6}>
            <Big w={44} icon={<InsertIcon />} lines={['Insert']} chevLine />
            <Big w={44} icon={<DeleteIcon />} lines={['Delete']} chevLine />
            <Big w={44} icon={<FormatIcon />} lines={['Format']} chevLine />
          </Body>
          <Foot name="Cells" />
        </Group>

        <Group $w={208}>
          <Body $pl={12}>
            <SmallCol $w={95}>
              <SmallRow $gap={4}><IconSlot><SigmaIcon /></IconSlot>AutoSum<Tool $w={8} $h={8} $ml={7}><Chev /></Tool></SmallRow>
              <SmallRow $gap={4}><IconSlot><FillIcon /></IconSlot>Fill<Chev /></SmallRow>
              <SmallRow $gap={4}><IconSlot><EraserIcon /></IconSlot>Clear<Chev /></SmallRow>
            </SmallCol>
            <Big w={46} icon={<SortIcon />} lines={['Sort &', 'Filter']} />
            <Big w={46} icon={<FindIcon />} lines={['Find &', 'Select']} />
          </Body>
          <Foot name="Editing" />
        </Group>

        <Group $w={62}>
          <Body><Big w={61} icon={<AnalyzeIcon />} lines={['Analyze', 'Data']} chevLine={false} /></Body>
          <Foot name="Analysis" />
        </Group>

        <Group $w={63}>
          <Body><Big w={62} icon={<AddinsIcon />} lines={['Add-ins']} /></Body>
          <Foot name="Add-ins" />
        </Group>

        <Rest><Chev c="#e0e0e0" w={9} /></Rest>
      </Ribbon>

      <FormulaBar>
        <NameBox>R30<Chev w={8} /></NameBox>
        <Dots><DotsV /></Dots>
        <FxBox><XIcon /><CheckIcon /><Fx>fx</Fx></FxBox>
        <FormulaInput><Chev w={9} /></FormulaInput>
      </FormulaBar>

      <Sheet>
        <GridView>
          <Grid>
            <Corner><Triangle /></Corner>
            {COLS.map(([l]) => <ColHead key={l}>{l}</ColHead>)}
            {ROWS.map(r => (
              <React.Fragment key={r}>
                <RowHead>{r}</RowHead>
                {COLS.map(([l, , title]) => (
                  <Cell key={l} $head={r === 1}>{r === 1 ? title : null}</Cell>
                ))}
              </React.Fragment>
            ))}
          </Grid>
        </GridView>
        <VScroll>
          <VTrack><Tri $up /><VThumb /><Spring /><Tri /></VTrack>
        </VScroll>
      </Sheet>

      <TabBar>
        <NavSlot $w={32}><Arrow /></NavSlot>
        <NavSlot $w={32}><Arrow right /></NavSlot>
        <SheetTab><SheetName>Company-Import-2023_09_27</SheetName></SheetTab>
        <TabDivider />
        <NavSlot $w={24} $ml={35}><Svg w={12} h={12}><path d="M6 0V12M0 6H12" stroke="#c8c8c8" /></Svg></NavSlot>
        <Spring />
        <NavSlot $w={16}><DotsV c="#e0e0e0" /></NavSlot>
        <HScroll><HTri $left /><HThumb /><Spring /><HTri /></HScroll>
      </TabBar>

      <Status>
        <StatusText $w={51}>Ready</StatusText>
        <Tool $w={15} $h={14}><MacroIcon /></Tool>
        <Tool $w={15} $h={15} $ml={17}><A11yIcon /></Tool>
        <StatusText $ml={4}>Accessibility: Unavailable</StatusText>
        <Spring />
        <ViewBtn $w={39} $on><GridViewIcon /></ViewBtn>
        <ViewBtn $w={40}><PageViewIcon /></ViewBtn>
        <ViewBtn $w={40}><BreakViewIcon /></ViewBtn>
        <Tool $w={18} $h={19}><Svg w={7} h={2}><path d="M0 1H7" stroke="#e8e8e8" strokeWidth="1.4" /></Svg></Tool>
        <Slider><SliderThumb /></Slider>
        <Tool $w={18} $h={19}><Svg w={9} h={9}><path d="M4.5 0V9M0 4.5H9" stroke="#e8e8e8" /></Svg></Tool>
        <Zoom>100%</Zoom>
      </Status>
    </App_>
  );
}
